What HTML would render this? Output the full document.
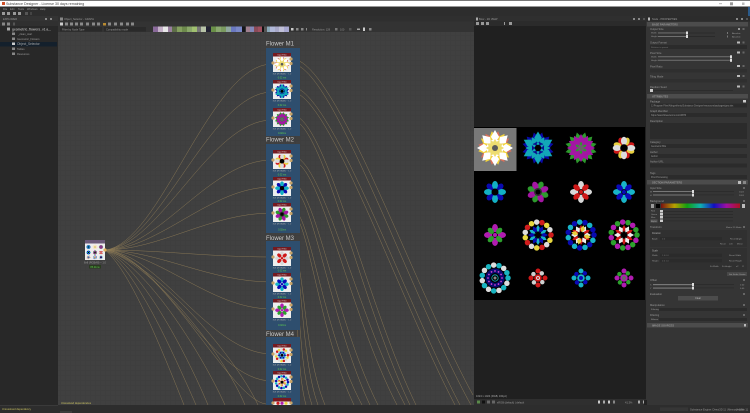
<!DOCTYPE html>
<html><head><meta charset="utf-8"><title>Substance Designer</title>
<style>
html,body{margin:0;padding:0;background:#2d2d2d;width:750px;height:413px;overflow:hidden}
svg{display:block;overflow:hidden;font-family:"Liberation Sans",sans-serif}
.t{font-size:3.2px;fill:#aaa}
.h{font-size:6px;fill:#c8c8c8}
.d{font-size:2.6px;fill:#999}
.g{font-size:2.4px;fill:#5fcf4f}
.wire{fill:none;stroke:#a88e5c;stroke-width:.45;opacity:.75}
.f{fill:#2b2b2b}
</style></head><body>
<svg width="750" height="413" viewBox="0 0 750 413" xmlns="http://www.w3.org/2000/svg">
<defs>
<pattern id="grid" width="5" height="5" patternUnits="userSpaceOnUse"><rect width="5" height="5" fill="#404040"/><path d="M5 0H0V5" fill="none" stroke="#3a3a3a" stroke-width=".4"/></pattern>
<linearGradient id="rb"><stop offset="0" stop-color="#7a1010"/><stop offset=".17" stop-color="#b8a000"/><stop offset=".33" stop-color="#10a010"/><stop offset=".5" stop-color="#10b0b0"/><stop offset=".67" stop-color="#1010c0"/><stop offset=".83" stop-color="#a010a0"/><stop offset="1" stop-color="#b01020"/></linearGradient>
<path id="k" d="M0-.28L.23-.62 0-1-.23-.62Z"/>
<ellipse id="e" cy="-.62" rx=".27" ry=".38"/>
<g id="w4"><use href="#k"/><use href="#k" transform="rotate(90)"/><use href="#k" transform="rotate(180)"/><use href="#k" transform="rotate(270)"/></g>
<g id="w8"><use href="#w4"/><use href="#w4" transform="rotate(45)"/></g>
<g id="w6"><use href="#k"/><use href="#k" transform="rotate(60)"/><use href="#k" transform="rotate(120)"/><use href="#k" transform="rotate(180)"/><use href="#k" transform="rotate(240)"/><use href="#k" transform="rotate(300)"/></g>
<g id="w12"><use href="#w6"/><use href="#w6" transform="rotate(30)"/></g>
<g id="e4"><use href="#e"/><use href="#e" transform="rotate(90)"/><use href="#e" transform="rotate(180)"/><use href="#e" transform="rotate(270)"/></g>

<g id="f1"><use href="#w8" fill="#d9705a" transform="rotate(11) scale(17)"/><use href="#w8" fill="#f2d43c" transform="rotate(34) scale(17)"/><use href="#w8" fill="#fff" transform="scale(18)"/><circle r="8.5" fill="#fff"/><use href="#w12" fill="#eedd70" transform="scale(9)"/><circle r="4.5" fill="#eedd70"/><circle r="3" fill="#5a5a5a"/></g>
<g id="f2"><use href="#w12" fill="#0a0aa8" transform="rotate(15) scale(16)"/><use href="#w6" fill="#12a8b8" transform="scale(16.5)"/><use href="#w6" fill="#12a8b8" transform="rotate(30) scale(12.5)"/><circle r="6" fill="#0a0a90"/><use href="#w6" fill="#12a8b8" transform="scale(6.5)"/><circle r="3.2" fill="#000"/></g>
<g id="f3"><use href="#w12" fill="#2d9a2d" transform="rotate(15) scale(16)"/><use href="#w12" fill="#a316a3" transform="scale(14)"/><circle r="8" fill="#a316a3"/><use href="#w6" fill="#2d9a2d" transform="scale(6.5)"/><circle r="3" fill="#666"/></g>
<g id="f4"><use href="#e4" fill="#cf1818" transform="rotate(68) scale(11)"/><use href="#e4" fill="#e8d040" transform="rotate(22) scale(11)"/><use href="#e4" fill="#ddd" transform="scale(11.3)"/><circle r="3.8" fill="#000"/></g>
<g id="f5"><use href="#e4" fill="#0a0ab0" transform="rotate(45) scale(11)"/><use href="#e4" fill="#12b0c4" transform="rotate(0) scale(11)"/><circle r="3.5" fill="#000"/></g>
<g id="f6"><use href="#e4" fill="#2d9a2d" transform="rotate(22) scale(11)"/><use href="#e4" fill="#a316a3" transform="rotate(67) scale(11)"/><circle r="4" fill="#333"/><circle r="2.5" fill="#000"/></g>
<g id="f7"><use href="#e4" fill="#d8d8d8" transform="scale(11)"/><use href="#e4" fill="#cf1818" transform="rotate(45) scale(10)"/><circle r="2" fill="#cf1818"/></g>
<g id="f8"><use href="#e4" fill="#18b4c8" transform="scale(11)"/><use href="#e4" fill="#0a0ab8" transform="rotate(45) scale(10)"/><circle r="2" fill="#0a0ab8"/></g>
<g id="f9"><use href="#e4" fill="#b01cb0" transform="scale(11)"/><use href="#e4" fill="#2da02d" transform="rotate(45) scale(9.5)"/><circle r="2" fill="#b01cb0"/></g>
<g id="f10"><circle r="13" fill="none" stroke="#d01c1c" stroke-width="5.5" stroke-linecap="round" pathLength="15" stroke-dasharray="0 3"/><circle r="13" fill="none" stroke="#e8d840" stroke-width="5.5" stroke-linecap="round" pathLength="15" stroke-dasharray="0 3" stroke-dashoffset="-1"/><circle r="13" fill="none" stroke="#ddd" stroke-width="5.5" stroke-linecap="round" pathLength="15" stroke-dasharray="0 3" stroke-dashoffset="-2"/><use href="#w6" fill="#18b4c8" transform="scale(10)"/><use href="#w6" fill="#0a0ab0" transform="rotate(30) scale(10)"/><circle r="3" fill="#000"/></g>
<g id="f11"><circle r="13" fill="none" stroke="#0a0ab0" stroke-width="5.5" stroke-linecap="round" pathLength="15" stroke-dasharray="0 2"/><circle r="13" fill="none" stroke="#18b4c8" stroke-width="5.5" stroke-linecap="round" pathLength="15" stroke-dasharray="0 2" stroke-dashoffset="-1"/><use href="#w6" fill="#cf1818" transform="scale(10)"/><use href="#w6" fill="#eee" transform="rotate(30) scale(10)"/><use href="#w4" fill="#e8d040" transform="rotate(15) scale(10)"/><circle r="3.2" fill="#000"/></g>
<g id="f12"><circle r="13" fill="none" stroke="#2da02d" stroke-width="5.5" stroke-linecap="round" pathLength="15" stroke-dasharray="0 2"/><circle r="13" fill="none" stroke="#b01cb0" stroke-width="5.5" stroke-linecap="round" pathLength="15" stroke-dasharray="0 2" stroke-dashoffset="-1"/><use href="#w6" fill="#cf1818" transform="scale(10)"/><use href="#w6" fill="#eee" transform="rotate(30) scale(10)"/><circle r="3.2" fill="#000"/></g>
<g id="f13"><circle r="13" fill="none" stroke="#18b4c0" stroke-width="5.5" stroke-linecap="round" pathLength="15" stroke-dasharray="0 2"/><circle r="13" fill="none" stroke="#ddd" stroke-width="5.5" stroke-linecap="round" pathLength="15" stroke-dasharray="0 2" stroke-dashoffset="-1"/><circle r="9.5" fill="#0a0a70"/><circle r="7" fill="none" stroke="#d040d0" stroke-width="1.8" stroke-linecap="round" pathLength="12" stroke-dasharray="0 1"/><circle r="5" fill="#000"/><circle r="3.2" fill="none" stroke="#18b4c0" stroke-width=".8"/><circle r="1.5" fill="#888"/></g>
<g id="f14"><circle r="7" fill="none" stroke="#cf1818" stroke-width="5" stroke-linecap="round" pathLength="12" stroke-dasharray="0 3"/><circle r="6" fill="none" stroke="#d0d0d0" stroke-width="4.5" stroke-linecap="round" pathLength="12" stroke-dasharray="0 3" stroke-dashoffset="-1.5"/><circle r="3.8" fill="#cf1818"/><circle r="2" fill="#ddd"/><circle r="1" fill="#cf1818"/></g>
<g id="f15"><circle r="7" fill="none" stroke="#18b4c8" stroke-width="5" stroke-linecap="round" pathLength="12" stroke-dasharray="0 3"/><circle r="6" fill="none" stroke="#0a0ab8" stroke-width="4.5" stroke-linecap="round" pathLength="12" stroke-dasharray="0 3" stroke-dashoffset="-1.5"/><circle r="3.8" fill="#18b4c8"/><circle r="2" fill="#0a0ab8"/></g>
<g id="f16"><circle r="7" fill="none" stroke="#b01cb0" stroke-width="5" stroke-linecap="round" pathLength="12" stroke-dasharray="0 3"/><circle r="6" fill="none" stroke="#2da02d" stroke-width="4.5" stroke-linecap="round" pathLength="12" stroke-dasharray="0 3" stroke-dashoffset="-1.5"/><circle r="3.8" fill="#b01cb0"/><circle r="2" fill="#666"/></g>
<g id="n"><rect width="18" height="19" fill="#eee"/><rect width="18" height="3.5" fill="#741a20"/><text x="9" y="2.6" text-anchor="middle" font-size="2" fill="#ddd">Input Filter</text><circle cx="0" cy="10" r="1.6" fill="#c8a468"/><circle cx="18" cy="6" r="1.6" fill="#c8a468"/><circle cx="18" cy="10.5" r="1.6" fill="#c8a468"/><text x="9" y="21.6" text-anchor="middle" font-size="2.2" fill="#aaa">8x8 (RGBA8) ~ 1.0</text></g>
</defs>

<!-- chrome -->
<rect width="750" height="413" fill="#2d2d2d"/>
<rect width="750" height="1" fill="#777"/>
<rect y="1" width="750" height="5.5" fill="#fff"/>
<rect x="2" y="2" width="3" height="3" fill="#d0502a"/>
<text x="6" y="5" font-size="3.6" fill="#444">Substance Designer - License 30 days remaining</text>
<rect x="719" y="3.5" width="3" height=".6" fill="#888"/><rect x="730" y="2.3" width="3" height="3" fill="#999"/><rect x="742" y="2.5" width="2.5" height="2.5" fill="#bbb"/>
<text x="3" y="10.2" class="d">File</text><text x="10" y="10.2" class="d">Edit</text><text x="18" y="10.2" class="d">Tools</text><text x="27" y="10.2" class="d">Windows</text><text x="40" y="10.2" class="d">Help</text>
<g fill="#999"><rect x="2" y="12" width="3" height="3"/><rect x="7" y="12" width="3" height="3"/><rect x="13" y="12" width="3" height="3"/><rect x="18" y="12" width="3" height="3"/><rect x="25" y="12" width="3" height="3" fill="#555"/><rect x="30" y="12" width="2" height="3" fill="#444"/></g>
<rect x="748" y="7" width="2" height="9" fill="#2a5a8a"/>

<!-- explorer -->
<rect y="16" width="58" height="389" fill="#282828"/>
<rect y="16" width="58" height="5" fill="#333"/>
<text x="3" y="20" class="d">EXPLORER</text>
<rect y="21" width="58" height="5" fill="#303030"/>
<g fill="#888"><rect x="2" y="22.5" width="3" height="3"/><rect x="7" y="22.5" width="3" height="3"/><rect x="13" y="22.5" width="2" height="3" fill="#555"/><rect x="45" y="18" width="2" height="2"/><rect x="50" y="18" width="2" height="2"/></g>
<rect x="0" y="42" width="57" height="4.5" fill="#14202c"/>
<rect x="7" y="27.5" width="3" height="3" fill="#aaa"/>
<text x="12" y="30.5" class="t" font-weight="bold">geometric_flowers_v1 a...</text>
<g fill="#888"><rect x="12" y="32.5" width="3" height="2.5"/><rect x="12" y="37.5" width="3" height="2.5"/><rect x="12" y="42.5" width="3" height="2.5" fill="#ccc"/><rect x="12" y="47.5" width="3" height="2.5"/><rect x="12" y="52.5" width="3" height="2.5"/></g>
<text x="18" y="35.2" class="d">_clean_start</text><text x="17" y="40.2" class="d">Geometric_Flowers</text><text x="17" y="45.2" class="t">Object_Selector</text><text x="17" y="50.2" class="d">Tables</text><text x="17" y="55.2" class="d">Resources</text>

<!-- graph panel -->
<rect x="58" y="16" width="416" height="16" fill="#333"/>
<rect x="58" y="16" width="416" height="5.5" fill="#2f2f2f"/>
<rect x="60" y="17.5" width="3" height="3" fill="#888"/>
<text x="64" y="20.2" class="d">Object_Selector - GRAPH</text>
<g fill="#8a8a8a"><rect x="60" y="22.5" width="3" height="3" fill="#ccc"/><rect x="65" y="22.5" width="3" height="3"/><rect x="70" y="22.5" width="3" height="3"/><rect x="75" y="22.5" width="3" height="3"/><rect x="80" y="22.5" width="3" height="3"/><rect x="86" y="22.5" width="3" height="3"/><rect x="92" y="22.5" width="3" height="3"/><rect x="97" y="22.5" width="3" height="3"/><rect x="103" y="23" width="3" height="2.5" fill="#b88a30"/><rect x="108" y="22.5" width="3" height="3"/><rect x="114" y="22.5" width="3" height="3"/><rect x="120" y="22.5" width="3" height="3"/><rect x="126" y="22.5" width="3" height="3"/><rect x="131" y="22.5" width="3" height="3"/></g>
<rect x="60" y="27" width="42" height="4.5" fill="#2a2a2a"/><text x="62" y="30.5" class="d">Filter by Node Type</text>
<rect x="104" y="27" width="42" height="4.5" fill="#2a2a2a"/><text x="106" y="30.5" class="d">Compatibility mode</text>
<g>
<rect x="153" y="26.5" width="5" height="5.5" fill="#8a6a9a"/><rect x="158" y="26.5" width="5" height="5.5" fill="#c4b0c8"/><rect x="163" y="26.5" width="5" height="5.5" fill="#e8e8e8"/><rect x="168" y="26.5" width="4" height="5.5" fill="#9a80a0"/><rect x="172" y="26.5" width="5" height="5.5" fill="#5e6e48"/><rect x="177" y="26.5" width="5" height="5.5" fill="#85a060"/><rect x="182" y="26.5" width="5" height="5.5" fill="#6d8a4c"/><rect x="187" y="26.5" width="5" height="5.5" fill="#8aa86a"/><rect x="192" y="26.5" width="5" height="5.5" fill="#a0c070"/><rect x="197" y="26.5" width="4" height="5.5" fill="#777"/><rect x="201" y="26.5" width="5" height="5.5" fill="#b8c4a8"/><rect x="206" y="26.5" width="5" height="5.5" fill="#223"/><rect x="211" y="26.5" width="5" height="5.5" fill="#6a9048"/><rect x="216" y="26.5" width="5" height="5.5" fill="#8aa870"/><rect x="221" y="26.5" width="5" height="5.5" fill="#7a9a60"/><rect x="226" y="26.5" width="5" height="5.5" fill="#90a8a0"/><rect x="231" y="26.5" width="5" height="5.5" fill="#6a78c0"/><rect x="236" y="26.5" width="6" height="5.5" fill="#7a88c8"/><rect x="242" y="26.5" width="3" height="5.5" fill="#15151a"/><rect x="245" y="26.5" width="1" height="5.5" fill="#333"/>
<rect x="246" y="26.5" width="4" height="5.5" fill="#a08090"/><rect x="250" y="26.5" width="4" height="5.5" fill="#8488b8"/><rect x="254" y="26.5" width="4" height="5.5" fill="#8a4a58"/><rect x="258" y="26.5" width="4" height="5.5" fill="#a05060"/><rect x="262" y="26.5" width="2" height="5.5" fill="#111"/><rect x="264" y="26.5" width="3" height="5.5" fill="#555"/><rect x="267" y="26.5" width="3" height="5.5" fill="#8aa8b8"/><rect x="270" y="26.5" width="5" height="5.5" fill="#b0b8d8"/><rect x="275" y="26.5" width="4" height="5.5" fill="#a8a8c8"/><rect x="279" y="26.5" width="5" height="5.5" fill="#c0c0d8"/><rect x="284" y="26.5" width="5" height="5.5" fill="#a8a8d0"/>
</g>
<g fill="#8a8a8a"><rect x="291" y="28" width="2.5" height="2.5" fill="#ccc"/><rect x="296" y="28" width="2.5" height="2.5"/><rect x="301" y="28" width="2.5" height="2.5"/><rect x="306" y="28" width="1" height="2.5"/></g>
<text x="312" y="30.5" class="d">Resolution: 128</text><text x="340" y="30.5" class="d">100</text><rect x="335" y="28" width="2.5" height="2.5" fill="#777"/><rect x="349" y="28" width="2.5" height="2.5" fill="#555"/><rect x="357" y="28.5" width="3" height="1.5" fill="#aaa"/><rect x="363" y="27.5" width="2" height="3.5" fill="#ccc"/><rect x="369" y="28" width="2.5" height="2.5" fill="#888"/>

<!-- canvas -->
<rect x="58" y="32" width="416" height="373" fill="url(#grid)"/>

<!-- wires from source -->
<g class="wire">
<path d="M105 250C160 245 210 64 272 64"/><path d="M105 250C160 246 210 92 272 92"/><path d="M105 250C160 247 210 120 272 120"/><path d="M105 250C160 248 210 160 272 160"/><path d="M105 250C160 249 210 187 272 187"/><path d="M105 250C160 250 210 213 272 213"/><path d="M105 250C160 250 210 257 272 257"/><path d="M105 250C160 251 210 282 272 282"/><path d="M105 250C160 252 210 309 272 309"/><path d="M105 250C160 253 210 354 272 354"/><path d="M105 250C160 254 210 381 272 381"/><path d="M105 250C160 255 230 400 266 404"/>
<path d="M105 250C150 260 232 350 258 405"/><path d="M105 250C150 262 222 350 245 405"/><path d="M105 250C145 264 200 350 225 405"/><path d="M105 250C140 266 185 350 208 405"/><path d="M105 250C135 268 172 350 196 405"/><path d="M105 250C130 270 162 350 184 405"/>
</g>
<!-- wires to right -->
<g class="wire">
<path d="M292 59C335 59 415 290 473 395"/><path d="M292 64C332 64 410 295 471 405"/>
<path d="M292 87C330 87 405 300 460 405"/><path d="M292 92C328 92 400 300 455 405"/>
<path d="M292 115C325 115 365 300 416 405"/><path d="M292 120C322 120 360 300 410 405"/>
<path d="M292 156C322 156 355 310 405 405"/><path d="M292 161C320 161 348 310 397 405"/>
<path d="M292 183C315 183 335 320 378 405"/><path d="M292 188C312 188 330 320 370 405"/>
<path d="M292 209C310 209 322 330 362 405"/><path d="M292 214C308 214 318 330 354 405"/>
<path d="M292 253C305 253 302 350 325 405"/><path d="M292 258C303 258 300 355 318 405"/>
<path d="M292 278C301 278 297 360 312 405"/><path d="M292 283C299 283 295 365 306 405"/>
</g>

<!-- frames -->
<rect x="266" y="48" width="34" height="88" fill="#2e4e6e"/>
<rect x="266" y="144" width="34" height="89" fill="#2e4e6e"/>
<rect x="266" y="241" width="34" height="89" fill="#2e4e6e"/>
<rect x="266" y="337" width="34" height="68" fill="#2e4e6e"/>
<text x="266" y="45.5" class="h">Flower M1</text>
<text x="266" y="141.5" class="h">Flower M2</text>
<text x="266" y="240" class="h">Flower M3</text>
<text x="266" y="336" class="h">Flower M4</text>

<!-- nodes -->
<g transform="translate(273 53)"><use href="#n"/><g transform="translate(9 11.2) scale(.44)"><use href="#f1"/></g></g>
<text x="282" y="78.5" text-anchor="middle" class="g">0.02 ms</text>
<g transform="translate(273 80)"><use href="#n"/><g transform="translate(9 11.2) scale(.46)"><use href="#f2"/></g></g>
<text x="282" y="106" text-anchor="middle" class="g">0.02 ms</text>
<g transform="translate(273 108)"><use href="#n"/><g transform="translate(9 11.2) scale(.46)"><use href="#f3"/></g></g>
<text x="282" y="134" text-anchor="middle" class="g">0.02ms</text>

<g transform="translate(273 150)"><use href="#n"/><g transform="translate(9 11.2) scale(.62)"><use href="#f4"/></g></g>
<text x="282" y="175.5" text-anchor="middle" class="g">0.02 ms</text>
<g transform="translate(273 177)"><use href="#n"/><g transform="translate(9 11.2) scale(.62)"><use href="#f5"/></g></g>
<text x="282" y="202" text-anchor="middle" class="g">0.02 ms</text>
<g transform="translate(273 203)"><use href="#n"/><g transform="translate(9 11.2) scale(.62)"><use href="#f6"/></g></g>
<text x="282" y="230.5" text-anchor="middle" class="g">0.02ms</text>

<g transform="translate(273 247)"><use href="#n"/><g transform="translate(9 11.2) scale(.62)"><use href="#f7"/></g></g>
<text x="282" y="271.5" text-anchor="middle" class="g">0.02 ms</text>
<g transform="translate(273 273)"><use href="#n"/><g transform="translate(9 11.2) scale(.62)"><use href="#f8"/></g></g>
<text x="282" y="298" text-anchor="middle" class="g">0.02 ms</text>
<g transform="translate(273 299)"><use href="#n"/><g transform="translate(9 11.2) scale(.62)"><use href="#f9"/></g></g>
<text x="282" y="326" text-anchor="middle" class="g">0.02ms</text>

<g transform="translate(273 344)"><use href="#n"/><g transform="translate(9 11.2) scale(.46)"><use href="#f10"/></g></g>
<text x="282" y="370" text-anchor="middle" class="g">0.02 ms</text>
<g transform="translate(273 371)"><use href="#n"/><g transform="translate(9 11.2) scale(.46)"><use href="#f11"/></g></g>
<text x="282" y="397" text-anchor="middle" class="g">0.02 ms</text>
<rect x="273" y="398" width="18" height="7" fill="#eee"/><rect x="273" y="398" width="18" height="3.5" fill="#741a20"/>
<circle cx="278" cy="403.3" r="1.6" fill="#d01c1c"/><circle cx="282" cy="403.3" r="1.6" fill="#b01cb0"/><circle cx="286" cy="403.3" r="1.6" fill="#e8d840"/><circle cx="273" cy="403" r="1.6" fill="#c8a468"/><circle cx="291" cy="403" r="1.6" fill="#c8a468"/>

<!-- source node -->
<rect x="85" y="240" width="20" height="20" fill="#eee"/>
<rect x="85" y="240" width="20" height="3.5" fill="#6a5a78"/>
<g transform="translate(88.5 247) scale(.14)"><use href="#f2"/></g><g transform="translate(95 247) scale(.14)"><use href="#f1"/></g><g transform="translate(101 247) scale(.14)"><use href="#f3"/></g>
<g transform="translate(88.5 252.5) scale(.2)"><use href="#f5"/></g><g transform="translate(95 252.5) scale(.2)"><use href="#f6"/></g><g transform="translate(101 252.5) scale(.2)"><use href="#f7"/></g>
<g transform="translate(88.5 257.3) scale(.12)"><use href="#f10"/></g><g transform="translate(95 257.3) scale(.12)"><use href="#f11"/></g><g transform="translate(101 257.3) scale(.12)"><use href="#f13"/></g>
<circle cx="105" cy="250" r="1.6" fill="#e0b060"/>
<text x="95" y="263.5" text-anchor="middle" class="d">8x8 (RGBA8) ~ 1.0</text>
<rect x="89" y="265" width="12" height="3.5" fill="#2a3a20"/>
<text x="95" y="268" text-anchor="middle" class="g">85.21ms</text>

<text x="61" y="404" font-size="2.6" fill="#c8c060">Unresolved dependencies</text>

<!-- 2D view -->
<rect x="474" y="16" width="172" height="389" fill="#202020"/>
<rect x="474" y="16" width="172" height="5" fill="#2f2f2f"/>
<rect x="474" y="21" width="172" height="5" fill="#2b2b2b"/>
<rect x="476" y="17.5" width="2" height="3" fill="#aaa"/><text x="479" y="20.2" class="d">Boor - 2D VIEW</text>
<g fill="#999"><rect x="476" y="22" width="3" height="3"/><rect x="481" y="22" width="3" height="3"/><rect x="486" y="22" width="3" height="3"/><rect x="504" y="22" width="1" height="3"/><rect x="509" y="22" width="3" height="3"/></g>
<g fill="#888"><rect x="633" y="18" width="2" height="2"/><rect x="638" y="18" width="2" height="2"/><rect x="643" y="18" width="2" height="2" fill="#555"/></g>
<rect x="474" y="127" width="171" height="173" fill="#000"/>
<rect x="474" y="128" width="42.5" height="43" fill="#787878"/>
<use href="#f1" x="495" y="148"/><use href="#f2" x="538" y="148"/><use href="#f3" x="581" y="148"/><use href="#f4" x="624" y="148"/>
<use href="#f5" x="495" y="192"/><use href="#f6" x="538" y="192"/><use href="#f7" x="581" y="192"/><use href="#f8" x="624" y="192"/>
<use href="#f9" x="495" y="235"/><use href="#f10" x="538" y="235"/><use href="#f11" x="581" y="235"/><use href="#f12" x="624" y="235"/>
<use href="#f13" x="495" y="278"/><use href="#f14" x="538" y="278"/><use href="#f15" x="581" y="278"/><use href="#f16" x="624" y="278"/>
<text x="476" y="397" font-size="2.6" fill="#aaa">1024 x 1024 (RGB, 16bpc)</text>
<rect x="474" y="399" width="172" height="6" fill="#2f2f2f"/>
<g><rect x="477" y="400.5" width="3" height="3" fill="#5a8a4a"/><rect x="482" y="400.5" width="3" height="3" fill="#111"/><rect x="487" y="400.5" width="3" height="3" fill="#666"/><rect x="492" y="400.5" width="3" height="3" fill="#666"/><text x="497" y="403.5" class="d">sRGB (default) | default</text><rect x="598" y="400.5" width="2" height="3" fill="#ccc"/><rect x="603" y="400.5" width="2" height="3" fill="#aaa"/><rect x="608" y="400.5" width="2" height="3" fill="#ccc"/><rect x="613" y="400.5" width="2" height="3" fill="#888"/><text x="625" y="403.5" class="d">41.3%</text><rect x="638" y="400.5" width="2" height="3" fill="#aaa"/><rect x="643" y="400.5" width="2" height="3" fill="#aaa"/></g>

<!-- properties -->
<rect x="646" y="16" width="104" height="389" fill="#353535"/>
<rect x="644" y="400" width="3" height="5" fill="#222"/>
<rect x="646" y="16" width="104" height="5.5" fill="#2c2c2c"/>
<rect x="648" y="17.5" width="2" height="3" fill="#bbb"/><text x="652" y="20.2" class="d">Node - PROPERTIES</text>
<g fill="#888"><rect x="736" y="18" width="2" height="2"/><rect x="741" y="18" width="2" height="2"/><rect x="746" y="18" width="2" height="2" fill="#555"/></g>
<rect x="647" y="22" width="101" height="4.5" fill="#4c4c4c"/><text x="652" y="25.3" class="d" font-weight="bold">BASE PARAMETERS</text>

<text x="650" y="30" class="d">Output Size</text><rect x="738" y="28" width="2" height="2" fill="#999"/><rect x="742.5" y="28" width="2" height="2" fill="#666"/>
<text x="651" y="33.5" font-size="2.2" fill="#999">Width</text><text x="651" y="37" font-size="2.2" fill="#999">Height</text>
<rect x="658" y="32.5" width="30" height=".9" fill="#777"/><rect x="658" y="36" width="30" height=".9" fill="#777"/><rect x="688" y="32.5" width="27" height=".9" fill="#2a2a2a"/><rect x="688" y="36" width="27" height=".9" fill="#2a2a2a"/>
<rect x="686" y="31.5" width="2" height="3" fill="#ddd"/><rect x="686" y="35" width="2" height="3" fill="#ddd"/>
<rect x="727" y="32" width="1" height="2" fill="#777"/><rect x="727" y="35.5" width="1" height="2" fill="#777"/>
<text x="732" y="34" font-size="2.2" fill="#999">Absolute</text><text x="732" y="37.5" font-size="2.2" fill="#999">Absolute</text>

<text x="650" y="43.5" class="d">Output Format</text><rect x="737" y="41.5" width="3" height="2" fill="#bbb"/><rect x="742.5" y="41.5" width="2" height="2" fill="#666"/>
<rect x="650" y="45" width="97" height="4" class="f"/><text x="651" y="48" font-size="2.2" fill="#777">Relative to parent</text>

<text x="650" y="54" class="d">Pixel Size</text><rect x="737" y="51.5" width="3" height="2" fill="#bbb"/><rect x="742.5" y="51.5" width="2" height="2" fill="#666"/>
<text x="651" y="57.5" font-size="2.2" fill="#999">Width</text><text x="651" y="61" font-size="2.2" fill="#999">Height</text>
<rect x="658" y="56.3" width="73" height=".9" fill="#777"/><rect x="658" y="59.8" width="73" height=".9" fill="#777"/><rect x="730" y="55.3" width="2" height="3" fill="#ddd"/><rect x="730" y="58.8" width="2" height="3" fill="#ddd"/>

<text x="650" y="67.5" class="d">Pixel Ratio</text><rect x="737" y="65" width="3" height="2" fill="#bbb"/><rect x="742.5" y="65" width="2" height="2" fill="#666"/><rect x="650" y="69" width="97" height="3.5" fill="#2f2f2f"/>
<text x="650" y="77.5" class="d">Tiling Mode</text><rect x="737" y="75" width="3" height="2" fill="#bbb"/><rect x="742.5" y="75" width="2" height="2" fill="#666"/><rect x="650" y="79" width="97" height="3.5" fill="#2f2f2f"/>
<text x="650" y="88" class="d">Random Seed</text><rect x="737" y="85.5" width="3" height="2" fill="#bbb"/><rect x="742.5" y="85.5" width="2" height="2" fill="#666"/><rect x="650" y="89" width="3" height="3" fill="#ccc"/><rect x="653" y="90" width="80" height=".8" fill="#2a2a2a"/>

<rect x="647" y="94" width="101" height="4.5" fill="#4c4c4c"/><text x="652" y="97.4" class="d" font-weight="bold">ATTRIBUTES</text>
<text x="650" y="102.5" class="d">Package</text><rect x="743" y="100" width="3" height="2.5" fill="#ccc"/>
<rect x="650" y="103.5" width="97" height="4" class="f"/><text x="651" y="106.7" font-size="2.3" fill="#999">C:/Program Files/Allegorithmic/Substance Designer/resources/packages/geo.sbs</text>
<text x="650" y="112" class="d">Graph Identifier</text>
<rect x="650" y="113" width="97" height="4" class="f"/><text x="651" y="116.2" font-size="2.3" fill="#999">https://www.flowersconv.com/9876</text>
<text x="650" y="122" class="d">Description</text>
<rect x="650" y="123" width="97" height="16" class="f"/>
<text x="650" y="143" class="d">Category</text><rect x="650" y="144" width="97" height="4" class="f"/><text x="651" y="147" font-size="2.3" fill="#999">Geometric Bits</text>
<text x="650" y="153" class="d">Author</text><rect x="650" y="154" width="97" height="4" class="f"/><text x="651" y="157" font-size="2.3" fill="#999">Author</text>
<text x="650" y="162.5" class="d">Author URL</text><rect x="650" y="163.5" width="97" height="4" class="f"/>
<text x="650" y="174" class="d">Tags</text><rect x="650" y="175" width="97" height="4" class="f"/><text x="651" y="178" font-size="2.3" fill="#999">Post Processing</text>

<rect x="647" y="180" width="101" height="4.5" fill="#4c4c4c"/><text x="652" y="183.5" class="d" font-weight="bold">SECTION PARAMETERS</text><rect x="738" y="181" width="3" height="3" fill="#bbb"/><rect x="743" y="181" width="3" height="3" fill="#888"/>
<text x="650" y="189" class="d">Input Size</text><rect x="743" y="187" width="2" height="2" fill="#666"/>
<rect x="653" y="191" width="40" height="1" fill="#777"/><rect x="653" y="194.5" width="40" height="1" fill="#777"/><rect x="692" y="190" width="2" height="3" fill="#ddd"/><rect x="692" y="193.5" width="2" height="3" fill="#ddd"/><rect x="694" y="191" width="40" height=".8" fill="#2a2a2a"/><rect x="694" y="194.5" width="40" height=".8" fill="#2a2a2a"/>
<text x="650" y="192.5" font-size="2.2" fill="#999">W</text><text x="650" y="196" font-size="2.2" fill="#999">H</text><text x="739" y="192.5" font-size="2.2" fill="#999">1024</text><text x="739" y="196" font-size="2.2" fill="#999">1024</text>
<text x="650" y="202" class="d">Background</text><rect x="743" y="200" width="2" height="2" fill="#666"/>
<rect x="651" y="204" width="3" height="4" fill="#999"/><rect x="656" y="204" width="4" height="4" fill="#000"/>
<rect x="661" y="203.5" width="79" height="4.5" fill="url(#rb)"/><rect x="742" y="204" width="3" height="4" fill="#bbb"/>
<text x="651" y="211.5" font-size="2.2" fill="#999">Red</text><text x="651" y="215" font-size="2.2" fill="#999">Green</text><text x="651" y="218" font-size="2.2" fill="#999">Blue</text><rect x="650.5" y="219.5" width="7" height="3" fill="#555"/><text x="651" y="221.8" font-size="2.2" fill="#999">Alpha</text>
<rect x="660" y="210" width="3" height="2.5" fill="#ccc"/><rect x="660" y="213" width="3" height="2.5" fill="#ccc"/><rect x="660" y="216" width="3" height="2.5" fill="#ccc"/><rect x="660" y="219.5" width="3" height="2.5" fill="#ccc"/>
<rect x="663" y="211" width="70" height=".8" fill="#2a2a2a"/><rect x="663" y="214" width="70" height=".8" fill="#2a2a2a"/><rect x="663" y="217" width="70" height=".8" fill="#2a2a2a"/><rect x="663" y="220.5" width="70" height=".8" fill="#2a2a2a"/>
<text x="650" y="228" class="d">Transform</text><text x="726" y="228" font-size="2.2" fill="#999">Matrix 2D Mode</text><rect x="743" y="226" width="2" height="2" fill="#666"/>
<rect x="650" y="230" width="97" height="17" fill="#303030"/>
<text x="652" y="234" font-size="2.4" fill="#aaa">Rotation</text>
<rect x="660" y="237" width="62" height="3.5" class="f"/><text x="652" y="239.5" font-size="2.2" fill="#999">Angle</text><text x="662" y="239.5" font-size="2.2" fill="#777">0.0</text><text x="730" y="239.5" font-size="2.2" fill="#999">Reset Angle</text>
<text x="720" y="244.5" font-size="2.2" fill="#999">Reset</text><text x="729" y="244.5" font-size="2.2" fill="#999">Left</text><text x="737" y="244.5" font-size="2.2" fill="#999">Mirror</text>
<rect x="650" y="248" width="97" height="22" fill="#303030"/>
<text x="652" y="251.5" font-size="2.4" fill="#aaa">Scale</text>
<rect x="660" y="253.5" width="62" height="3.5" class="f"/><text x="652" y="256" font-size="2.2" fill="#999">Width</text><text x="662" y="256" font-size="2.2" fill="#777">1.0 0.0</text><text x="729" y="256" font-size="2.2" fill="#999">Reset Width</text>
<rect x="660" y="259" width="62" height="3.5" class="f"/><text x="652" y="261.5" font-size="2.2" fill="#999">Height</text><text x="662" y="261.5" font-size="2.2" fill="#777">0.0 1.0</text><text x="729" y="261.5" font-size="2.2" fill="#999">Reset Height</text>
<text x="710" y="267" font-size="2.2" fill="#999">Fit Width</text><text x="722" y="267" font-size="2.2" fill="#999">Fit Height</text><text x="736" y="267" font-size="2.2" fill="#999">x2</text><text x="742" y="267" font-size="2.2" fill="#999">/2</text>
<rect x="727" y="272" width="20" height="4" fill="#484848"/><text x="729" y="275" font-size="2.2" fill="#aaa">Set Scale Center</text>
<text x="650" y="281" class="d">Offset</text><rect x="743" y="279" width="2" height="2" fill="#666"/>
<rect x="653" y="284" width="40" height="1.2" fill="#777"/><rect x="653" y="287.5" width="40" height="1.2" fill="#777"/><rect x="692" y="283" width="2" height="3" fill="#ddd"/><rect x="692" y="286.5" width="2" height="3" fill="#ddd"/><rect x="694" y="284" width="40" height=".8" fill="#2a2a2a"/><rect x="694" y="287.5" width="40" height=".8" fill="#2a2a2a"/>
<text x="650" y="285.5" font-size="2.2" fill="#999">X</text><text x="650" y="289" font-size="2.2" fill="#999">Y</text><text x="740" y="285.5" font-size="2.2" fill="#999">0.00</text><text x="740" y="289" font-size="2.2" fill="#999">0.00</text>
<text x="650" y="295" class="d">Evaluation</text><rect x="743" y="293" width="2" height="2" fill="#666"/>
<rect x="678" y="296" width="40" height="4.5" fill="#4c4c4c"/><text x="698" y="299.2" text-anchor="middle" font-size="2.4" fill="#bbb">Clear</text>
<text x="650" y="306" class="d">Manipulation</text><rect x="743" y="304" width="2" height="2" fill="#666"/>
<text x="651" y="310" font-size="2.2" fill="#999">Filtering</text><rect x="659" y="308" width="88" height="3" class="f"/>
<text x="650" y="316" class="d">Filtering</text><rect x="743" y="314" width="2" height="2" fill="#666"/>
<text x="651" y="320" font-size="2.2" fill="#999">Bilinear</text><rect x="659" y="318" width="88" height="3" class="f"/>
<rect x="647" y="323" width="101" height="4.5" fill="#4c4c4c"/><text x="652" y="326.4" class="d" font-weight="bold">IMAGE SOURCES</text><rect x="744" y="324" width="2" height="2.5" fill="#bbb"/>

<!-- status -->
<rect y="405" width="750" height="8" fill="#2d2d2d"/>
<rect y="405" width="58" height="1" fill="#3a3a3a"/>
<text x="2" y="410" font-size="2.7" fill="#c8c060">Unresolved dependency</text>
<rect x="660" y="407.5" width="28" height="3.5" fill="#363636"/>
<text x="690" y="410.5" font-size="2.6" fill="#999">Substance Engine: Direct3D 11 | Memory: 13%</text>
<text x="736" y="410.5" font-size="2.6" fill="#999">Version 11</text>
<rect x="60" y="411" width="12" height="2" fill="#3c3c3c"/>
</svg>
</body></html>
